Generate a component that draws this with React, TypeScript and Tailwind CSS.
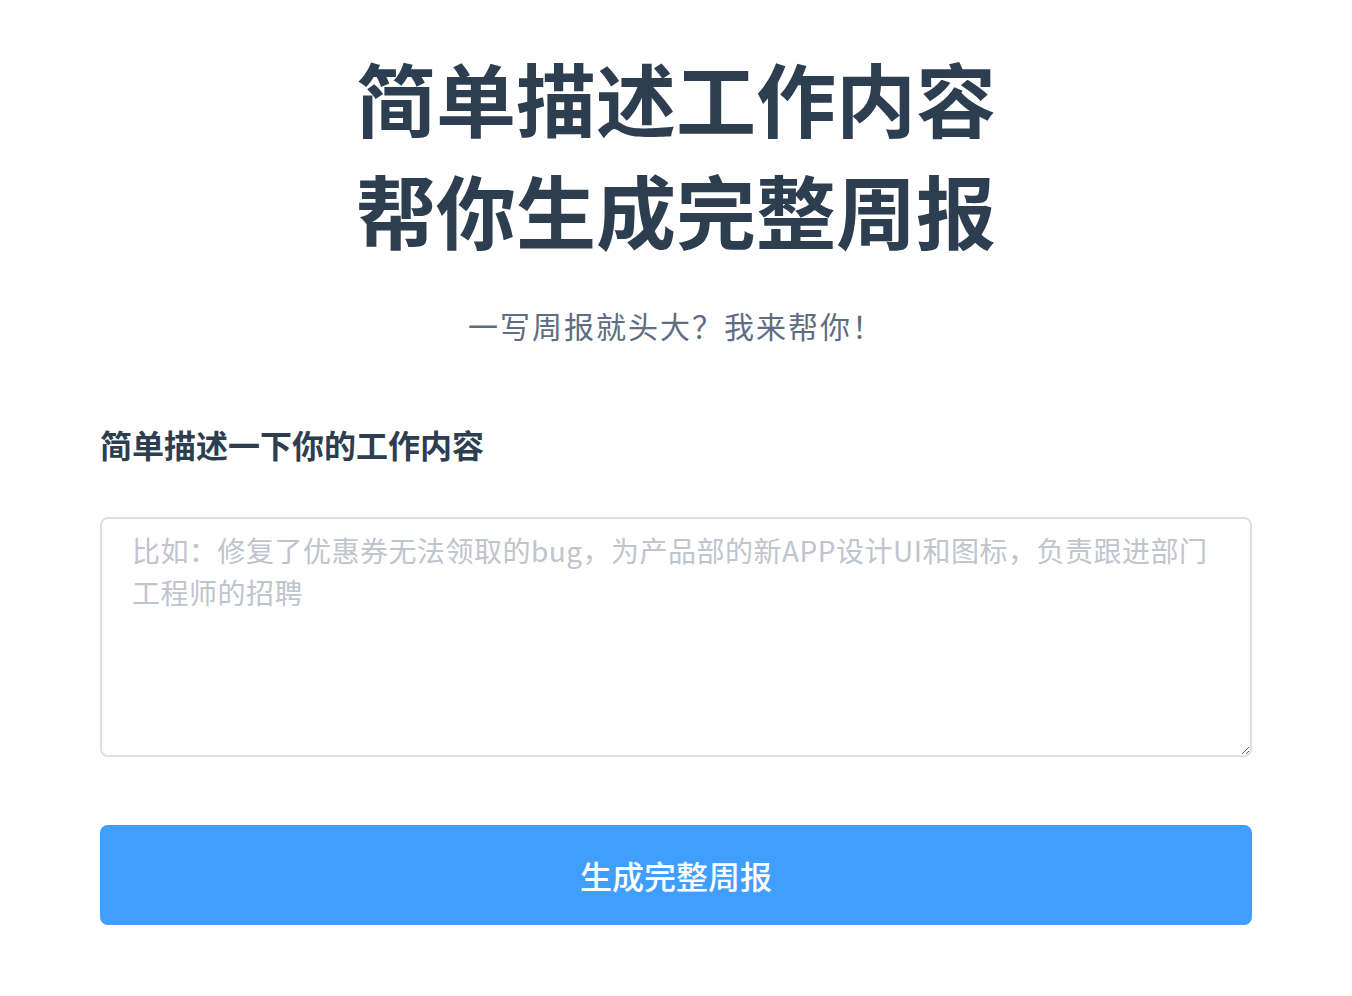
const fontStack = "font-['PingFang_SC','Noto_Sans_CJK_SC',sans-serif]";

const App = () => {
  return (
    <div className={`min-h-screen bg-white ${fontStack}`}>
      <div className="flex flex-col px-[100px] pt-[40px]">
        <h1 className="text-center text-[80px] leading-[112px] font-semibold text-[#2c3e50]">
          简单描述工作内容
          <br />
          帮你生成完整周报
        </h1>
        <p className="mt-[40px] text-center text-[30px] leading-[42px] tracking-[2px] text-[#5e6d82]">
          一写周报就头大？我来帮你！
        </p>
        <label className="mt-[74px] text-[32px] leading-[48px] font-semibold text-[#2c3e50]">
          简单描述一下你的工作内容
        </label>
        <textarea
          className="mt-[49px] h-[240px] w-full rounded-[8px] border-2 border-[#dcdfe6] px-[30px] py-[10px] text-[28px] leading-[42px] tracking-[0.5px] text-[#606266] placeholder:text-[#c0c4cc] outline-none"
          placeholder="比如：修复了优惠券无法领取的bug，为产品部的新APP设计UI和图标，负责跟进部门工程师的招聘"
        />
        <button className="mt-[68px] h-[100px] w-full rounded-[8px] bg-[#409eff] text-[32px] font-medium text-white">
          生成完整周报
        </button>
      </div>
    </div>
  );
};

export default App;
